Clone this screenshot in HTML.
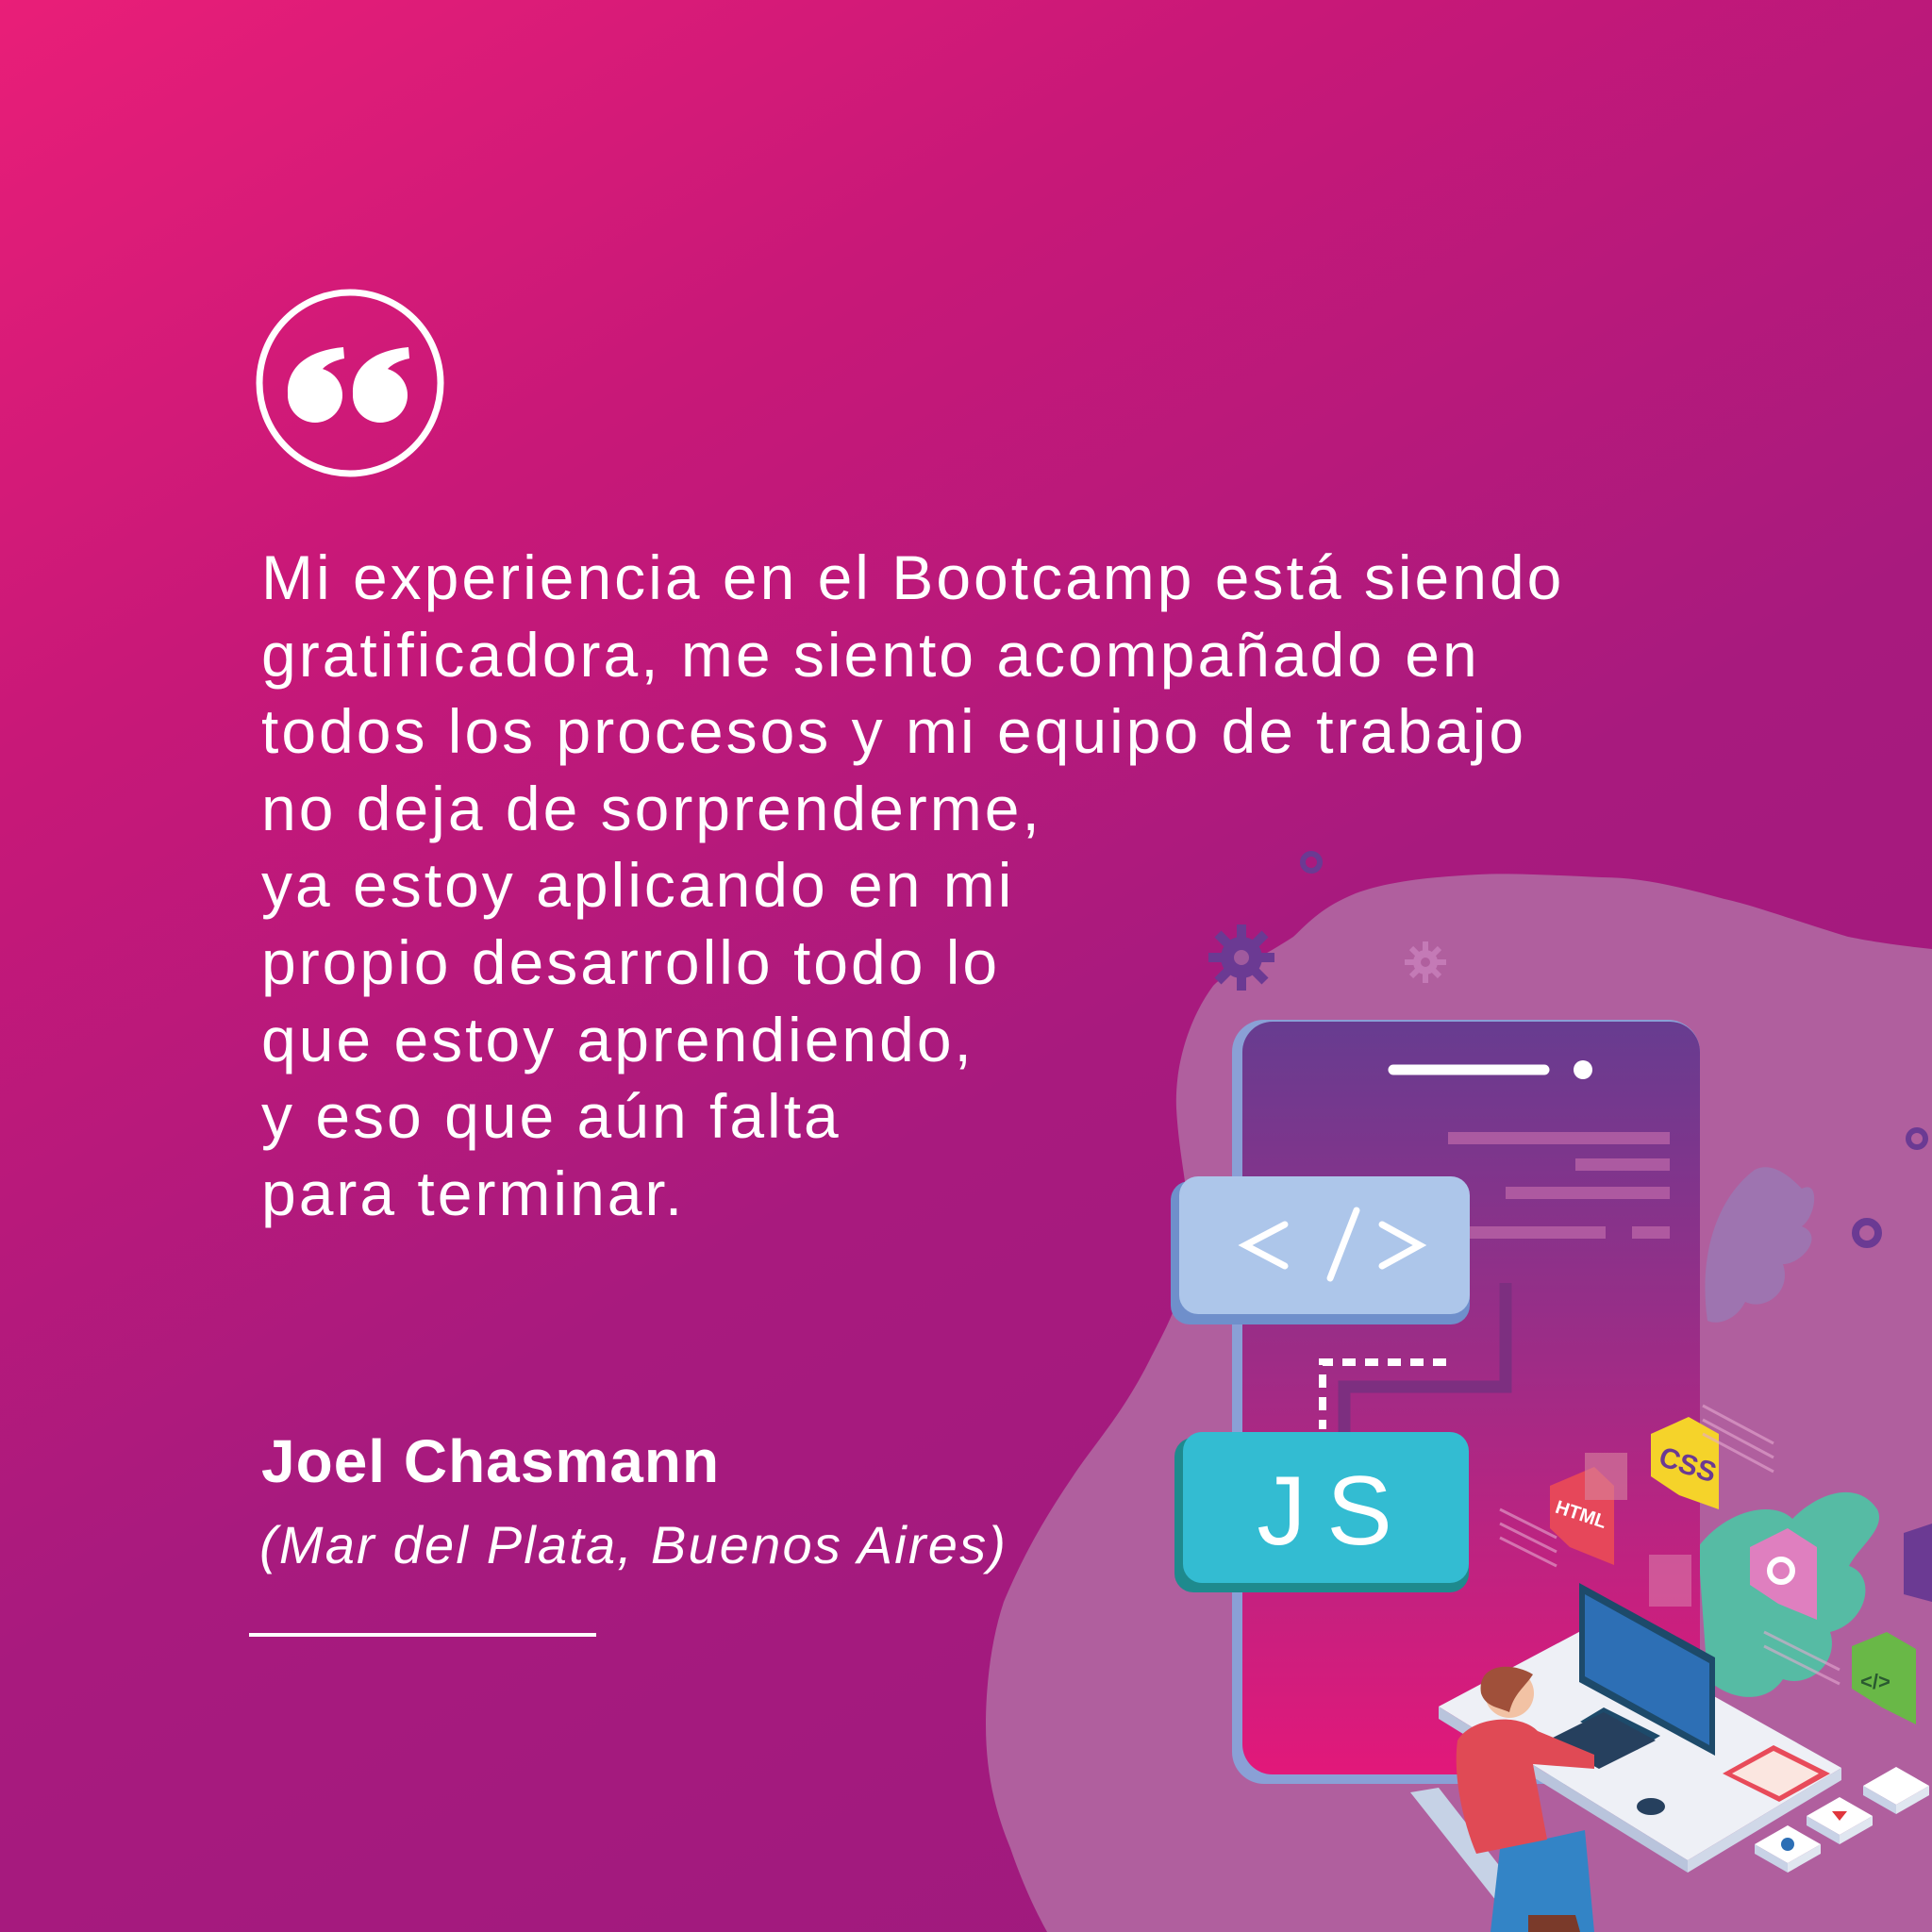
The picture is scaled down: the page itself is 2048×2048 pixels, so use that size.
<!DOCTYPE html>
<html><head><meta charset="utf-8"><style>
html,body{margin:0;padding:0}
body{width:2048px;height:2048px;position:relative;overflow:hidden;background:linear-gradient(150deg,#e91e78 0%,#c81878 25%,#a81a7e 55%,#9c1a7d 100%);font-family:"Liberation Sans",sans-serif;color:#fff}
svg{position:absolute;left:0;top:0}
.q{position:absolute;left:277px;top:572px;font-size:66px;line-height:81.6px;white-space:pre;letter-spacing:3px}
.n{position:absolute;left:277px;top:1512px;font-size:64px;font-weight:bold;letter-spacing:1px}
.c{position:absolute;left:275px;top:1605px;font-size:56px;font-style:italic;letter-spacing:2.2px}
.l{position:absolute;left:264px;top:1731px;width:368px;height:4px;background:#fff}
</style></head><body>
<svg width="2048" height="2048" viewBox="0 0 2048 2048">
<defs>
<linearGradient id="ph" x1="0" y1="0" x2="0" y2="1"><stop offset="0" stop-color="#673c90"/><stop offset="1" stop-color="#e2187a"/></linearGradient>
</defs>
<path d="M2048 1006 C1990 1000 1960 993 1959 993 C1900 975 1860 960 1828 953 C1780 940 1740 930 1698 930 C1650 928 1600 925 1567 927 C1510 930 1470 935 1437 947 C1400 962 1385 980 1371 993 C1330 1020 1300 1030 1286 1045 C1260 1080 1245 1130 1247 1175 C1250 1230 1262 1270 1260 1306 C1258 1370 1240 1400 1221 1437 C1190 1500 1160 1530 1136 1567 C1100 1620 1080 1660 1064 1698 C1050 1740 1045 1790 1045 1828 C1045 1880 1055 1920 1071 1959 C1085 2000 1100 2030 1110 2048 L2048 2048 Z" fill="#b05f9e"/>
<g fill="#6b3a93"><circle cx="1316" cy="1015" r="22"/>
<g stroke="#6b3a93" stroke-width="10"><line x1="1316" y1="980" x2="1316" y2="1050"/><line x1="1281" y1="1015" x2="1351" y2="1015"/><line x1="1291" y1="990" x2="1341" y2="1040"/><line x1="1341" y1="990" x2="1291" y2="1040"/></g></g>
<circle cx="1316" cy="1015" r="8" fill="#a05a9e"/>
<g fill="#c47ab6"><circle cx="1511" cy="1020" r="13"/><g stroke="#c47ab6" stroke-width="6"><line x1="1511" y1="998" x2="1511" y2="1042"/><line x1="1489" y1="1020" x2="1533" y2="1020"/><line x1="1496" y1="1005" x2="1526" y2="1035"/><line x1="1526" y1="1005" x2="1496" y2="1035"/></g></g>
<circle cx="1511" cy="1020" r="5" fill="#b05f9e"/>
<g fill="none" stroke="#6b3a93"><circle cx="1390" cy="914" r="9" stroke-width="6"/><circle cx="2032" cy="1207" r="9" stroke-width="6"/><circle cx="1979" cy="1307" r="12" stroke-width="8"/></g>
<path d="M1810 1400 C1800 1330 1820 1270 1860 1240 C1880 1230 1900 1250 1910 1260 C1930 1250 1925 1290 1910 1300 C1935 1310 1910 1340 1890 1340 C1900 1370 1870 1390 1850 1380 C1840 1400 1820 1405 1810 1400 Z" fill="#9e74b0"/>
<path d="M1800 1640 C1830 1600 1880 1590 1900 1610 C1930 1580 1970 1570 1990 1600 C2000 1620 1970 1640 1960 1660 C1990 1670 1980 1720 1940 1730 C1950 1760 1920 1790 1890 1780 C1870 1810 1830 1800 1810 1780 Z" fill="#56bba4"/>
<rect x="1306" y="1081" width="496" height="810" rx="34" fill="#8aa0d6"/>
<rect x="1317" y="1083" width="485" height="798" rx="32" fill="url(#ph)"/>
<line x1="1477" y1="1134" x2="1637" y2="1134" stroke="#fff" stroke-width="11" stroke-linecap="round"/>
<circle cx="1678" cy="1134" r="10" fill="#fff"/>
<g fill="#c06aaa" opacity="0.7">
<rect x="1535" y="1200" width="235" height="13"/><rect x="1670" y="1228" width="100" height="13"/><rect x="1596" y="1258" width="174" height="13"/><rect x="1547" y="1300" width="155" height="13"/><rect x="1730" y="1300" width="40" height="13"/></g>
<path d="M1596 1360 V1470 H1425 V1520" fill="none" stroke="#7d2f80" stroke-width="13"/>
<path d="M1533 1444 H1402 V1515" fill="none" stroke="#fff" stroke-width="8" stroke-dasharray="14 10"/>
<rect x="1241" y="1252" width="317" height="152" rx="20" fill="#6f8fcb"/>
<rect x="1250" y="1247" width="308" height="146" rx="20" fill="#adc6ea"/>
<g stroke="#fff" stroke-width="7" stroke-linecap="round" fill="none"><path d="M1362 1298 L1320 1320 L1362 1342"/><path d="M1410 1355 L1438 1283"/><path d="M1465 1298 L1505 1320 L1465 1342"/></g>
<rect x="1245" y="1524" width="312" height="164" rx="20" fill="#1e8a8e"/>
<rect x="1254" y="1518" width="303" height="160" rx="20" fill="#33bcd2"/>
<text x="1415" y="1637" font-family="Liberation Sans" font-size="104" fill="#fff" text-anchor="middle" letter-spacing="22">JS</text>
<g>
<path d="M1643 1575 L1690 1555 L1711 1575 L1711 1659 L1664 1640 L1643 1620Z" fill="#e6475a"/><text x="1648" y="1610" font-family="Liberation Sans" font-weight="bold" font-size="20" fill="#fff" transform="rotate(18 1670 1605)">HTML</text>
<path d="M1750 1520 L1790 1502 L1822 1520 L1822 1600 L1780 1585 L1750 1565Z" fill="#f5d32a"/><text x="1757" y="1560" font-family="Liberation Sans" font-weight="bold" font-size="30" fill="#6b3a93" transform="rotate(18 1780 1555)">CSS</text>
<path d="M1855 1640 L1895 1620 L1926 1640 L1926 1717 L1885 1700 L1855 1680Z" fill="#df7fbf"/><circle cx="1888" cy="1665" r="12" fill="none" stroke="#fff" stroke-width="6"/>
<path d="M1963 1745 L2000 1730 L2031 1748 L2031 1828 L1995 1810 L1963 1790Z" fill="#69b847"/><text x="1972" y="1790" font-family="Liberation Sans" font-weight="bold" font-size="22" fill="#2a5a30">&lt;/&gt;</text>
<path d="M2018 1625 L2048 1615 L2048 1698 L2018 1690Z" fill="#6b3a93"/>
<rect x="1680" y="1540" width="45" height="50" fill="#d7869f" opacity="0.6"/><rect x="1748" y="1648" width="45" height="55" fill="#d97aa8" opacity="0.6"/>
</g>
<g stroke="#e6a9d0" stroke-width="3" opacity="0.6"><line x1="1805" y1="1490" x2="1880" y2="1530"/><line x1="1805" y1="1505" x2="1880" y2="1545"/><line x1="1805" y1="1520" x2="1880" y2="1560"/><line x1="1590" y1="1600" x2="1650" y2="1630"/><line x1="1590" y1="1615" x2="1650" y2="1645"/><line x1="1590" y1="1630" x2="1650" y2="1660"/><line x1="1870" y1="1730" x2="1950" y2="1770"/><line x1="1870" y1="1745" x2="1950" y2="1785"/></g>
<path d="M1525 1809 L1685 1724 L1952 1874 L1789 1972Z" fill="#eef0f6"/>
<path d="M1525 1809 L1789 1972 L1789 1985 L1525 1822Z" fill="#b9c4dc"/><path d="M1789 1972 L1952 1874 L1952 1887 L1789 1985Z" fill="#d0d8e8"/>
<path d="M1826 1880 L1880 1850 L1940 1880 L1886 1910Z" fill="#e84b5a"/><path d="M1836 1880 L1880 1856 L1928 1880 L1886 1904Z" fill="#fbe6e0"/>
<path d="M1674 1678 L1818 1757 L1818 1861 L1674 1783Z" fill="#1d4a6a"/>
<path d="M1680 1690 L1812 1763 L1812 1850 L1680 1777Z" fill="#2d6fb5"/>
<path d="M1700 1810 L1760 1840 L1735 1855 L1675 1825Z" fill="#1d4a6a"/>
<path d="M1640 1845 L1700 1815 L1755 1845 L1695 1875Z" fill="#26405e"/>
<ellipse cx="1750" cy="1915" rx="15" ry="9" fill="#26405e"/>
<path d="M1495 1900 L1525 1895 L1595 1985 L1625 1975 L1645 2010 L1590 2020 Z" fill="#c6d2e6"/>
<path d="M1580 2048 L1590 1960 L1680 1940 L1690 2048Z" fill="#3384c6"/>
<path d="M1545 1845 C1560 1820 1610 1815 1630 1835 L1690 1860 L1690 1875 L1625 1870 L1640 1950 L1565 1965 C1550 1930 1540 1880 1545 1845Z" fill="#e04a55"/>
<circle cx="1600" cy="1795" r="26" fill="#f2c2a4"/>
<path d="M1570 1795 C1565 1765 1600 1760 1625 1775 C1615 1790 1605 1795 1600 1815 C1590 1810 1575 1810 1570 1795Z" fill="#a0503a"/>
<path d="M1620 2030 L1670 2030 L1675 2048 L1620 2048Z" fill="#7a3a2a"/>
<g><path d="M1860 1955 L1895 1935 L1930 1955 L1895 1975Z" fill="#fff"/><path d="M1860 1955 L1895 1975 L1895 1985 L1860 1965Z" fill="#c8d2e6"/><path d="M1895 1975 L1930 1955 L1930 1965 L1895 1985Z" fill="#e0e6f0"/><circle cx="1895" cy="1955" r="7" fill="#2d6fb5"/>
<path d="M1915 1925 L1950 1905 L1985 1925 L1950 1945Z" fill="#fff"/><path d="M1915 1925 L1950 1945 L1950 1955 L1915 1935Z" fill="#c8d2e6"/><path d="M1950 1945 L1985 1925 L1985 1935 L1950 1955Z" fill="#e0e6f0"/><path d="M1942 1920 L1958 1920 L1950 1930Z" fill="#e0363c"/>
<path d="M1975 1893 L2010 1873 L2045 1893 L2010 1913Z" fill="#fff"/><path d="M1975 1893 L2010 1913 L2010 1923 L1975 1903Z" fill="#c8d2e6"/><path d="M2010 1913 L2045 1893 L2045 1903 L2010 1923Z" fill="#e0e6f0"/></g>
<circle cx="371" cy="406" r="96" fill="none" stroke="#fff" stroke-width="7"/>
<circle cx="334" cy="419" r="29" fill="#fff"/><circle cx="403" cy="419" r="29" fill="#fff"/>
<path d="M306 425 C300 395 320 372 364 368 L365 380 C345 384 334 395 337 408 Z" fill="#fff"/>
<path d="M375 425 C369 395 389 372 433 368 L434 380 C414 384 403 395 406 408 Z" fill="#fff"/>
</svg>
<div class="q">Mi experiencia en el Bootcamp está siendo
gratificadora, me siento acompañado en
todos los procesos y mi equipo de trabajo
no deja de sorprenderme,
ya estoy aplicando en mi
propio desarrollo todo lo
que estoy aprendiendo,
y eso que aún falta
para terminar.</div>
<div class="n">Joel Chasmann</div>
<div class="c">(Mar del Plata, Buenos Aires)</div>
<div class="l"></div>
</body></html>
